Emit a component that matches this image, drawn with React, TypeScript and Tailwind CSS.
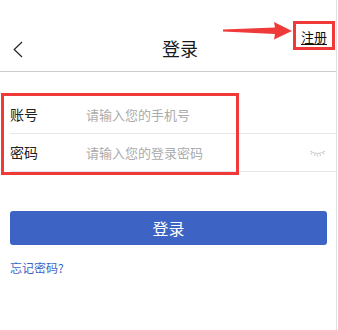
import React from "react";

const FONT = { fontFamily: '"Noto Sans CJK SC", "Noto Sans", sans-serif' };

function Row({ label, placeholder, children }: { label: string; placeholder: string; children?: React.ReactNode }) {
  return (
    <div className="ml-[10px] flex h-[38px] items-center border-b border-[#e6e6ea]">
      <span className="w-[76px] text-[14px] text-[#222]">{label}</span>
      <span className="flex-1 text-[13px] text-[#ababab]">{placeholder}</span>
      {children}
    </div>
  );
}

export default function App() {
  return (
    <div className="relative h-[330px] w-[337px] border-r border-[#e2e2e2] bg-white" style={FONT}>
      {/* header */}
      <div className="flex h-[72px] items-end border-b border-[#cdcdcd] pb-[12px]">
        <svg className="ml-[12px] mb-[1px]" width="12" height="17" viewBox="0 0 12 17">
          <path d="M10 1 L2.2 8.5 L10 16" fill="none" stroke="#222" strokeWidth="1.2" />
        </svg>
        <span className="ml-[138px] text-[18px] leading-[22px] text-[#1a1a1a]">登录</span>
      </div>

      {/* form */}
      <div className="mt-[24px]">
        <Row label="账号" placeholder="请输入您的手机号" />
        <Row label="密码" placeholder="请输入您的登录密码">
          <svg className="mr-[10px] mt-[2px]" width="17" height="7" viewBox="0 0 17 7">
            <path d="M1 1 Q8.5 6 16 1" fill="none" stroke="#c9c9c9" strokeWidth="1" />
            <path d="M3 2.5 L2 4.5 M6 4 L5.5 6 M8.5 4.6 L8.5 6.6 M11 4 L11.5 6 M14 2.5 L15 4.5" stroke="#c9c9c9" strokeWidth="1" />
          </svg>
        </Row>
      </div>

      <div className="px-[10px] pt-[39px]">
        <button className="flex h-[34px] w-[317px] items-center justify-center rounded-[3px] bg-[#3d64c4] text-[16px] text-white">
          登录
        </button>
        <div className="mt-[15px] text-[12px] leading-[16px] text-[#3d64c4]">忘记密码?</div>
      </div>

      {/* annotations */}
      <div className="absolute left-[293px] top-[21px] flex h-[29px] w-[42px] items-center justify-center border-[3px] border-[#f03a3a] pt-[3px]">
        <span className="text-[13px] leading-[14px] text-[#111] underline underline-offset-2">注册</span>
      </div>
      <svg className="absolute left-[222px] top-[20px]" width="72" height="22" viewBox="0 0 72 22">
        <polygon points="1,9.5 53,7.5 52,2 70,11 52,19.5 53,14 1,11.5" fill="#f03a3a" />
      </svg>
      <div className="absolute left-[1px] top-[93px] h-[82px] w-[238px] border-[3px] border-[#f03a3a]" />
    </div>
  );
}
